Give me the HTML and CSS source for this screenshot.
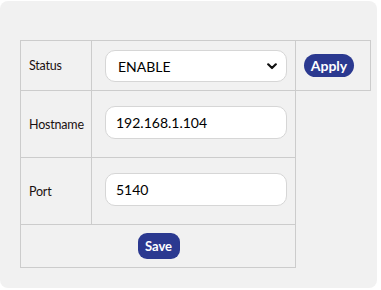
FILE: index.html
```html
<!DOCTYPE html>
<html>
<head>
<meta charset="utf-8">
<link rel="stylesheet" href="styles.css">
</head>
<body>
<div class="panel">
  <table class="settings">
    <tr class="row-status">
      <td class="label">Status</td>
      <td class="field">
        <div class="select">
          <span class="select-value">ENABLE</span>
          <svg class="chevron" width="10" height="7" viewBox="0 0 10 7"><path d="M1.2 1.3 L5 5 L8.8 1.3" fill="none" stroke="#111" stroke-width="2.2" stroke-linecap="round" stroke-linejoin="round"/></svg>
        </div>
      </td>
      <td class="action"><button class="btn btn-apply">Apply</button></td>
    </tr>
    <tr class="row-input">
      <td class="label">Hostname</td>
      <td class="field"><div class="input">192.168.1.104</div></td>
    </tr>
    <tr class="row-input">
      <td class="label">Port</td>
      <td class="field"><div class="input">5140</div></td>
    </tr>
    <tr class="row-save">
      <td class="save-cell" colspan="2"><button class="btn btn-save">Save</button></td>
    </tr>
  </table>
</div>
</body>
</html>
```

FILE: styles.css
```css
html, body {
  margin: 0;
  padding: 0;
  background: #ffffff;
}
body {
  font-family: "Lato", "Open Sans", sans-serif;
  color: #111;
}
.panel {
  margin-top: 1px;
  width: 377px;
  height: 287px;
  box-sizing: border-box;
  background: #f1f1f1;
  border-radius: 8px;
  padding: 39px 0 0 20px;
}
.settings {
  border-collapse: collapse;
  border-spacing: 0;
}
.settings td {
  border: 1px solid #cccccc;
  padding: 0;
  vertical-align: middle;
}
.label {
  width: 62px;
  padding-left: 8px !important;
  font-size: 12.5px;
  letter-spacing: -0.2px;
  color: #1a1010;
}
.row-status td { height: 49px; }
.row-input td { height: 66px; }
.row-save td { height: 42px; }
.field {
  width: 181px;
  padding: 0 8px 0 13px !important;
}
.action {
  width: 58px;
  padding: 0 8px 0 8px !important;
}
.select, .input {
  box-sizing: border-box;
  width: 182px;
  background: #ffffff;
  border: 1px solid #d6d6d6;
  border-radius: 10px;
  font-size: 14px;
  color: #000;
  display: flex;
  align-items: center;
}
.select {
  height: 32px;
  padding: 0 9px 0 12px;
  justify-content: space-between;
  margin-top: 1px;
}
.input {
  height: 33px;
  padding: 0 10px 0 10px;
  margin-top: -3px;
}
.btn {
  border: none;
  background: #2b3990;
  color: #ffffff;
  font-family: "Lato", "Open Sans", sans-serif;
  font-weight: bold;
  font-size: 13px;
  padding: 0;
  display: inline-flex;
  align-items: center;
  justify-content: center;
}
.btn-apply {
  width: 50px;
  height: 23px;
  border-radius: 12px;
  font-size: 14px;
}
.save-cell {
  text-align: center;
}
.btn-save {
  width: 42px;
  height: 26px;
  border-radius: 9px;
  margin-left: 1px;
}
```
